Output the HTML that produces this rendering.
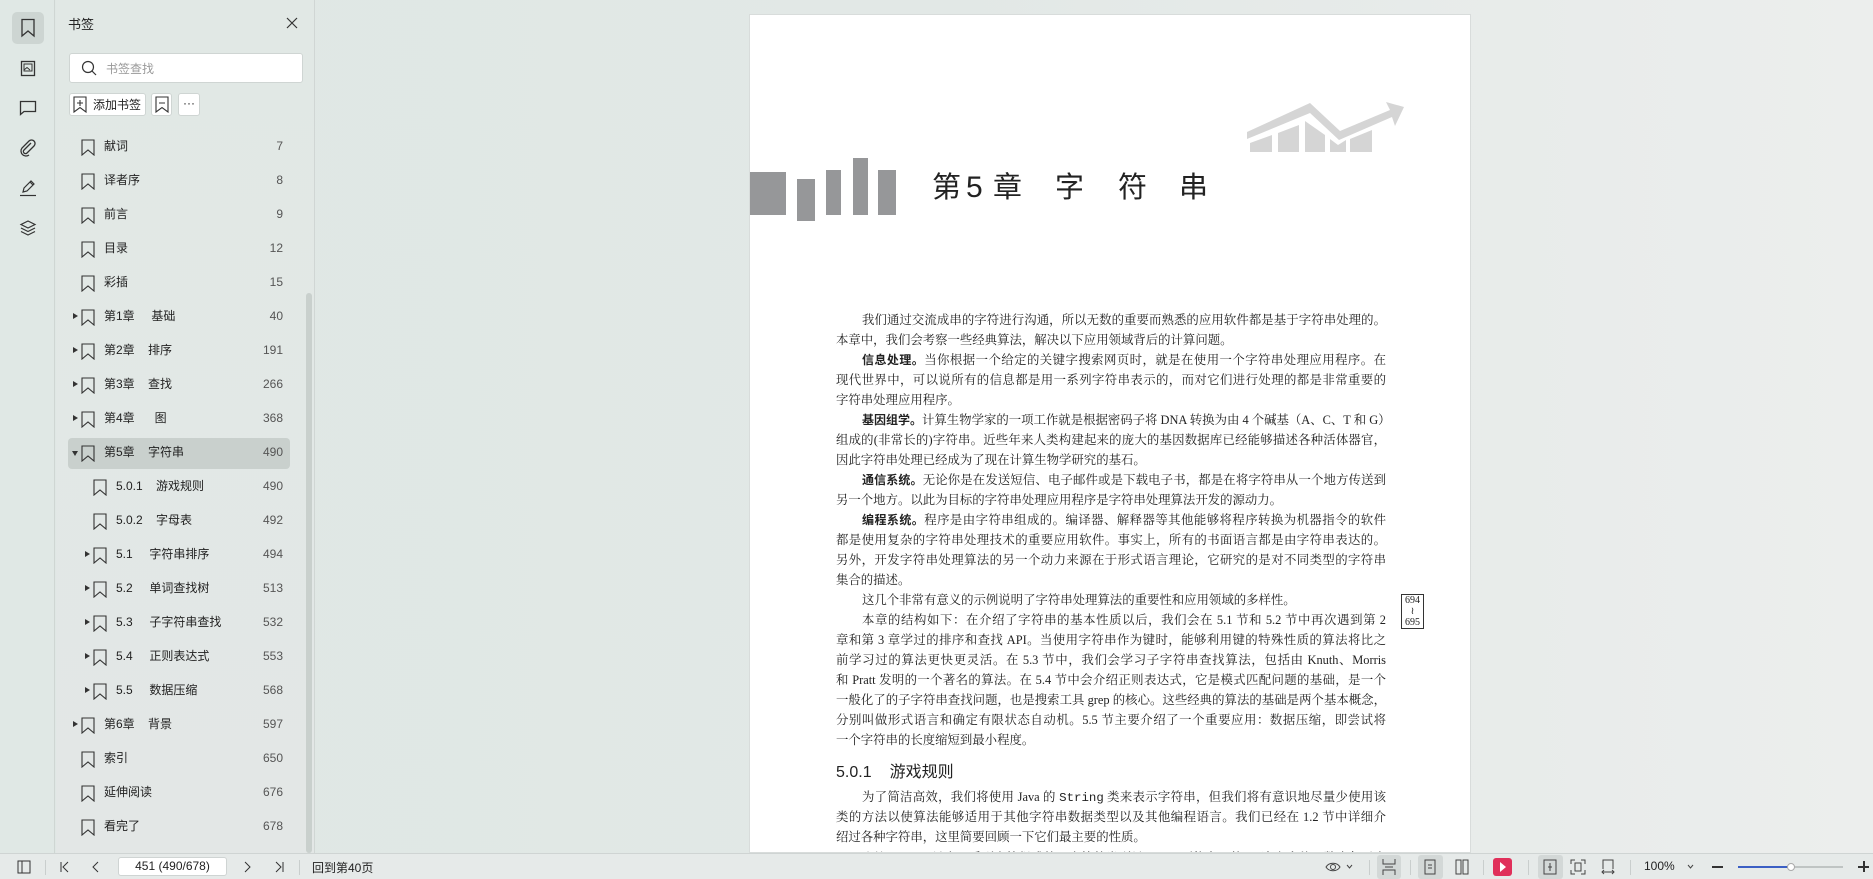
<!DOCTYPE html>
<html><head><meta charset="utf-8">
<style>
*{margin:0;padding:0;box-sizing:border-box}
body{width:1873px;height:879px;overflow:hidden;position:relative;font-family:"Liberation Sans","Noto Sans CJK SC",sans-serif;background:linear-gradient(90deg,#dfe7e4 0%,#e2e8e6 50%,#eceeed 100%);color:#222}
.abs{position:absolute}
#strip{left:0;top:0;width:55px;height:853px;background:#e0e8e5;border-right:1px solid #cfd6d3}
#panel{left:56px;top:0;width:259px;height:853px;background:linear-gradient(180deg,#e1e8e5,#e3e7e6);border-right:1px solid #d0d6d4}
.row{position:absolute;left:68px;width:222px;height:31px;font-size:12px;line-height:31px;color:#222}
.row .n{position:absolute;right:7px;top:0;color:#555}
.row svg{position:absolute;top:8px}
.row .t{position:absolute;top:0;white-space:pre}
.tri{position:absolute;top:12px;width:0;height:0;border-top:3.5px solid transparent;border-bottom:3.5px solid transparent;border-left:5px solid #333}
.trid{position:absolute;top:14px;width:0;height:0;border-left:3.5px solid transparent;border-right:3.5px solid transparent;border-top:5px solid #333}
.l0 svg{left:13px}.l0 .t{left:36px}.l0 .tri{left:5px}.l0 .trid{left:4px}
.l1 svg{left:25px}.l1 .t{left:48px}.l1 .tri{left:17px}
#page{left:749px;top:14px;width:722px;height:839px;background:#fff;border:1px solid #d8dcdb;overflow:hidden}
.ln{position:absolute;left:86px;width:550px;height:20px;font-family:"Liberation Serif","Noto Serif CJK SC",serif;font-size:12.4px;line-height:20px;color:#222;text-align:justify;text-align-last:justify;white-space:nowrap}
.ln.l{text-align-last:left}
.ln.i{left:112px;width:524px}
.ln b{font-family:"Noto Sans CJK SC",sans-serif;font-weight:700;font-size:12px}
#tb{left:0;top:853px;width:1873px;height:26px;background:#e6eae9;border-top:1px solid #cfd4d3;font-size:12px;color:#222}
.sep{position:absolute;top:6px;width:1px;height:15px;background:#c9cecd}
.hl{position:absolute;top:1px;height:24px;background:#d3d8d7;border-radius:3px}
.ch{position:absolute;top:158px;font-family:"Liberation Sans","Noto Sans CJK SC",sans-serif;font-size:29px;line-height:30px;color:#222}
</style></head><body>

<div id="strip" class="abs">
  <div class="abs" style="left:12px;top:12px;width:32px;height:32px;background:#cdd5d2;border-radius:5px"></div>
  <svg class="abs" style="left:20px;top:18px" width="16" height="20" viewBox="0 0 16 20"><path d="M2 1.5H14V18L8 13 2 18Z" fill="none" stroke="#333" stroke-width="1.3"/></svg>
  <svg class="abs" style="left:20px;top:60px" width="16" height="17" viewBox="0 0 16 17"><rect x="1.5" y="1.5" width="13" height="14" fill="none" stroke="#333" stroke-width="1.3"/><rect x="4" y="4" width="8" height="7" fill="none" stroke="#333" stroke-width="1"/><path d="M4 10 7 7.5 10 10" fill="none" stroke="#333"/></svg>
  <svg class="abs" style="left:19px;top:100px" width="18" height="16" viewBox="0 0 18 16"><path d="M1.5 1.5H16.5V11.5H5L1.5 14.5Z" fill="none" stroke="#333" stroke-width="1.3"/></svg>
  <svg class="abs" style="left:19px;top:139px" width="18" height="18" viewBox="0 0 18 18"><path d="M12 4 5 11a2 2 0 0 0 3 3l7-7a3.5 3.5 0 0 0-5-5L3 9a5 5 0 0 0 7 7" fill="none" stroke="#333" stroke-width="1.3"/></svg>
  <svg class="abs" style="left:19px;top:179px" width="18" height="18" viewBox="0 0 18 18"><path d="M4 13 5 9 12 2 15 5 8 12Z M11 3 14 6" fill="none" stroke="#333" stroke-width="1.2"/><path d="M1 16.5H17" stroke="#333" stroke-width="1.2"/></svg>
  <svg class="abs" style="left:19px;top:219px" width="18" height="18" viewBox="0 0 18 18"><path d="M9 2 16 5.5 9 9 2 5.5Z M2 9 9 12.5 16 9 M2 12.5 9 16 16 12.5" fill="none" stroke="#333" stroke-width="1.2"/></svg>
</div>

<div id="panel" class="abs">
  <div class="abs" style="left:12px;top:14px;font-size:13px;color:#222">书签</div>
  <svg class="abs" style="left:230px;top:17px" width="12" height="12" viewBox="0 0 12 12"><path d="M1 1 11 11M11 1 1 11" stroke="#333" stroke-width="1.2"/></svg>
  <div class="abs" style="left:13px;top:53px;width:234px;height:30px;background:#fff;border:1px solid #cfd5d3;border-radius:3px"></div>
  <svg class="abs" style="left:25px;top:60px" width="16" height="16" viewBox="0 0 16 16"><circle cx="7" cy="7" r="5.5" fill="none" stroke="#333" stroke-width="1.2"/><path d="M11 11 15 15" stroke="#333" stroke-width="1.2"/></svg>
  <div class="abs" style="left:50px;top:60px;font-size:12px;color:#999">书签查找</div>
  <div class="abs" style="left:13px;top:93px;width:77px;height:23px;background:#fff;border:1px solid #cfd5d3;border-radius:3px"></div>
  <svg class="abs" style="left:17px;top:96px" width="14" height="17" viewBox="0 0 14 17"><path d="M1 1H13V16L7 11.5 1 16Z M7 4V10M4 7H10" fill="none" stroke="#333" stroke-width="1.1"/></svg>
  <div class="abs" style="left:37px;top:96px;font-size:12px">添加书签</div>
  <div class="abs" style="left:95px;top:93px;width:21px;height:23px;background:#fff;border:1px solid #cfd5d3;border-radius:3px"></div>
  <svg class="abs" style="left:99px;top:96px" width="14" height="17" viewBox="0 0 14 17"><path d="M1 1H13V16L7 11.5 1 16Z M4 7H10" fill="none" stroke="#333" stroke-width="1.1"/></svg>
  <div class="abs" style="left:122px;top:93px;width:22px;height:23px;background:#fff;border:1px solid #cfd5d3;border-radius:3px;font-size:12px;text-align:center;line-height:18px">···</div>
  <div class="abs" style="left:250px;top:293px;width:6px;height:560px;background:#c9d0cd;border-radius:3px"></div>
</div>

<div class="abs" style="left:68px;top:438px;width:222px;height:31px;background:#c9d0cd;border-radius:4px"></div>

<div class="row l0" style="top:131px"><svg width="14" height="17" viewBox="0 0 14 17"><path d="M1 1H13V16L7 11 1 16Z" fill="none" stroke="#333" stroke-width="1.1"/></svg><span class="t">献词</span><span class="n">7</span></div>
<div class="row l0" style="top:165px"><svg width="14" height="17" viewBox="0 0 14 17"><path d="M1 1H13V16L7 11 1 16Z" fill="none" stroke="#333" stroke-width="1.1"/></svg><span class="t">译者序</span><span class="n">8</span></div>
<div class="row l0" style="top:199px"><svg width="14" height="17" viewBox="0 0 14 17"><path d="M1 1H13V16L7 11 1 16Z" fill="none" stroke="#333" stroke-width="1.1"/></svg><span class="t">前言</span><span class="n">9</span></div>
<div class="row l0" style="top:233px"><svg width="14" height="17" viewBox="0 0 14 17"><path d="M1 1H13V16L7 11 1 16Z" fill="none" stroke="#333" stroke-width="1.1"/></svg><span class="t">目录</span><span class="n">12</span></div>
<div class="row l0" style="top:267px"><svg width="14" height="17" viewBox="0 0 14 17"><path d="M1 1H13V16L7 11 1 16Z" fill="none" stroke="#333" stroke-width="1.1"/></svg><span class="t">彩插</span><span class="n">15</span></div>
<div class="row l0" style="top:301px"><div class="tri"></div><svg width="14" height="17" viewBox="0 0 14 17"><path d="M1 1H13V16L7 11 1 16Z" fill="none" stroke="#333" stroke-width="1.1"/></svg><span class="t">第1章     基础</span><span class="n">40</span></div>
<div class="row l0" style="top:335px"><div class="tri"></div><svg width="14" height="17" viewBox="0 0 14 17"><path d="M1 1H13V16L7 11 1 16Z" fill="none" stroke="#333" stroke-width="1.1"/></svg><span class="t">第2章    排序</span><span class="n">191</span></div>
<div class="row l0" style="top:369px"><div class="tri"></div><svg width="14" height="17" viewBox="0 0 14 17"><path d="M1 1H13V16L7 11 1 16Z" fill="none" stroke="#333" stroke-width="1.1"/></svg><span class="t">第3章    查找</span><span class="n">266</span></div>
<div class="row l0" style="top:403px"><div class="tri"></div><svg width="14" height="17" viewBox="0 0 14 17"><path d="M1 1H13V16L7 11 1 16Z" fill="none" stroke="#333" stroke-width="1.1"/></svg><span class="t">第4章      图</span><span class="n">368</span></div>
<div class="row l0" style="top:437px"><div class="trid"></div><svg width="14" height="17" viewBox="0 0 14 17"><path d="M1 1H13V16L7 11 1 16Z" fill="none" stroke="#333" stroke-width="1.1"/></svg><span class="t">第5章    字符串</span><span class="n">490</span></div>
<div class="row l1" style="top:471px"><svg width="14" height="17" viewBox="0 0 14 17"><path d="M1 1H13V16L7 11 1 16Z" fill="none" stroke="#333" stroke-width="1.1"/></svg><span class="t">5.0.1    游戏规则</span><span class="n">490</span></div>
<div class="row l1" style="top:505px"><svg width="14" height="17" viewBox="0 0 14 17"><path d="M1 1H13V16L7 11 1 16Z" fill="none" stroke="#333" stroke-width="1.1"/></svg><span class="t">5.0.2    字母表</span><span class="n">492</span></div>
<div class="row l1" style="top:539px"><div class="tri"></div><svg width="14" height="17" viewBox="0 0 14 17"><path d="M1 1H13V16L7 11 1 16Z" fill="none" stroke="#333" stroke-width="1.1"/></svg><span class="t">5.1     字符串排序</span><span class="n">494</span></div>
<div class="row l1" style="top:573px"><div class="tri"></div><svg width="14" height="17" viewBox="0 0 14 17"><path d="M1 1H13V16L7 11 1 16Z" fill="none" stroke="#333" stroke-width="1.1"/></svg><span class="t">5.2     单词查找树</span><span class="n">513</span></div>
<div class="row l1" style="top:607px"><div class="tri"></div><svg width="14" height="17" viewBox="0 0 14 17"><path d="M1 1H13V16L7 11 1 16Z" fill="none" stroke="#333" stroke-width="1.1"/></svg><span class="t">5.3     子字符串查找</span><span class="n">532</span></div>
<div class="row l1" style="top:641px"><div class="tri"></div><svg width="14" height="17" viewBox="0 0 14 17"><path d="M1 1H13V16L7 11 1 16Z" fill="none" stroke="#333" stroke-width="1.1"/></svg><span class="t">5.4     正则表达式</span><span class="n">553</span></div>
<div class="row l1" style="top:675px"><div class="tri"></div><svg width="14" height="17" viewBox="0 0 14 17"><path d="M1 1H13V16L7 11 1 16Z" fill="none" stroke="#333" stroke-width="1.1"/></svg><span class="t">5.5     数据压缩</span><span class="n">568</span></div>
<div class="row l0" style="top:709px"><div class="tri"></div><svg width="14" height="17" viewBox="0 0 14 17"><path d="M1 1H13V16L7 11 1 16Z" fill="none" stroke="#333" stroke-width="1.1"/></svg><span class="t">第6章    背景</span><span class="n">597</span></div>
<div class="row l0" style="top:743px"><svg width="14" height="17" viewBox="0 0 14 17"><path d="M1 1H13V16L7 11 1 16Z" fill="none" stroke="#333" stroke-width="1.1"/></svg><span class="t">索引</span><span class="n">650</span></div>
<div class="row l0" style="top:777px"><svg width="14" height="17" viewBox="0 0 14 17"><path d="M1 1H13V16L7 11 1 16Z" fill="none" stroke="#333" stroke-width="1.1"/></svg><span class="t">延伸阅读</span><span class="n">676</span></div>
<div class="row l0" style="top:811px"><svg width="14" height="17" viewBox="0 0 14 17"><path d="M1 1H13V16L7 11 1 16Z" fill="none" stroke="#333" stroke-width="1.1"/></svg><span class="t">看完了</span><span class="n">678</span></div>

<div id="page" class="abs">
  <svg class="abs" style="left:0;top:0" width="722" height="220">
    <g fill="#969799">
      <rect x="0" y="157" width="36" height="43"/>
      <rect x="47" y="164" width="18" height="42"/>
      <rect x="76" y="155" width="15" height="45"/>
      <rect x="103" y="143" width="15" height="57"/>
      <rect x="128" y="155" width="18" height="45"/>
    </g>
    <g fill="#d5d5d5">
      <path d="M497 117 L560 88 L590 116 L640 95 L636 87 L654 92 L645 111 L642 102 L589 125 L560 98 L497 124Z"/>
      <path d="M500 128 L522 120 V137 H500Z M528 118 L549 110 V137 H528Z M555 106 L575 120 V137 H555Z M580 124 L588 130 L596 125 V137 H580Z M600 124 L622 115 V137 H600Z"/>
    </g>
  </svg>
  <div class="ch" style="left:182px">第</div>
  <div class="ch" style="left:216px;font-size:30px">5</div>
  <div class="ch" style="left:243px">章</div>
  <div class="ch" style="left:305px">字</div>
  <div class="ch" style="left:368px">符</div>
  <div class="ch" style="left:429px">串</div>

  <div class="ln i" style="top:295px">我们通过交流成串的字符进行沟通，所以无数的重要而熟悉的应用软件都是基于字符串处理的。</div>
  <div class="ln l" style="top:315px">本章中，我们会考察一些经典算法，解决以下应用领域背后的计算问题。</div>
  <div class="ln i" style="top:335px"><b>信息处理。</b>当你根据一个给定的关键字搜索网页时，就是在使用一个字符串处理应用程序。在</div>
  <div class="ln" style="top:355px">现代世界中，可以说所有的信息都是用一系列字符串表示的，而对它们进行处理的都是非常重要的</div>
  <div class="ln l" style="top:375px">字符串处理应用程序。</div>
  <div class="ln i" style="top:395px"><b>基因组学。</b>计算生物学家的一项工作就是根据密码子将 DNA 转换为由 4 个碱基（A、C、T 和 G）</div>
  <div class="ln" style="top:415px">组成的(非常长的)字符串。近些年来人类构建起来的庞大的基因数据库已经能够描述各种活体器官，</div>
  <div class="ln l" style="top:435px">因此字符串处理已经成为了现在计算生物学研究的基石。</div>
  <div class="ln i" style="top:455px"><b>通信系统。</b>无论你是在发送短信、电子邮件或是下载电子书，都是在将字符串从一个地方传送到</div>
  <div class="ln l" style="top:475px">另一个地方。以此为目标的字符串处理应用程序是字符串处理算法开发的源动力。</div>
  <div class="ln i" style="top:495px"><b>编程系统。</b>程序是由字符串组成的。编译器、解释器等其他能够将程序转换为机器指令的软件</div>
  <div class="ln" style="top:515px">都是使用复杂的字符串处理技术的重要应用软件。事实上，所有的书面语言都是由字符串表达的。</div>
  <div class="ln" style="top:535px">另外，开发字符串处理算法的另一个动力来源在于形式语言理论，它研究的是对不同类型的字符串</div>
  <div class="ln l" style="top:555px">集合的描述。</div>
  <div class="ln i l" style="top:575px">这几个非常有意义的示例说明了字符串处理算法的重要性和应用领域的多样性。</div>
  <div class="ln i" style="top:595px">本章的结构如下：在介绍了字符串的基本性质以后，我们会在 5.1 节和 5.2 节中再次遇到第 2</div>
  <div class="ln" style="top:615px">章和第 3 章学过的排序和查找 API。当使用字符串作为键时，能够利用键的特殊性质的算法将比之</div>
  <div class="ln" style="top:635px">前学习过的算法更快更灵活。在 5.3 节中，我们会学习子字符串查找算法，包括由 Knuth、Morris</div>
  <div class="ln" style="top:655px">和 Pratt 发明的一个著名的算法。在 5.4 节中会介绍正则表达式，它是模式匹配问题的基础，是一个</div>
  <div class="ln" style="top:675px">一般化了的子字符串查找问题，也是搜索工具 grep 的核心。这些经典的算法的基础是两个基本概念，</div>
  <div class="ln" style="top:695px">分别叫做形式语言和确定有限状态自动机。5.5 节主要介绍了一个重要应用：数据压缩，即尝试将</div>
  <div class="ln l" style="top:715px">一个字符串的长度缩短到最小程度。</div>
  <div class="abs" style="left:651px;top:579px;width:23px;height:35px;border:1px solid #333;font-family:'Liberation Serif',serif;font-size:10px;line-height:11px;text-align:center">694<br>≀<br>695</div>
  <div class="abs" style="left:86px;top:747px;font-family:'Liberation Sans','Noto Sans CJK SC',sans-serif;font-size:16px;line-height:22px;color:#222">5.0.1<span style="margin-left:18px">游戏规则</span></div>
  <div class="ln i" style="top:772px">为了简洁高效，我们将使用 Java 的 <span style="font-family:'Liberation Mono',monospace">String</span> 类来表示字符串，但我们将有意识地尽量少使用该</div>
  <div class="ln" style="top:792px">类的方法以使算法能够适用于其他字符串数据类型以及其他编程语言。我们已经在 1.2 节中详细介</div>
  <div class="ln l" style="top:812px">绍过各种字符串，这里简要回顾一下它们最主要的性质。</div>
  <div class="ln i" style="top:833px"><b>字符。</b>String 是由一系列字符组成的。字符的类型是 char，可能有 2 的 16 次方个值。数十年以来</div>
</div>

<div id="tb" class="abs">
  <svg class="abs" style="left:17px;top:6px" width="14" height="14" viewBox="0 0 14 14"><rect x="1" y="1" width="12" height="12" fill="none" stroke="#333"/><path d="M5 1V13" stroke="#333"/></svg>
  <div class="sep" style="left:45px"></div>
  <svg class="abs" style="left:60px;top:7px" width="10" height="12" viewBox="0 0 10 12"><path d="M1 1V11M8 1 3 6 8 11" fill="none" stroke="#333"/></svg>
  <svg class="abs" style="left:92px;top:7px" width="8" height="12" viewBox="0 0 8 12"><path d="M6 1 1 6 6 11" fill="none" stroke="#333"/></svg>
  <div class="abs" style="left:118px;top:3px;width:109px;height:19px;background:#fff;border:1px solid #cfd4d3;border-radius:3px;text-align:center;line-height:17px;font-size:12px">451 (490/678)</div>
  <svg class="abs" style="left:243px;top:7px" width="8" height="12" viewBox="0 0 8 12"><path d="M2 1 7 6 2 11" fill="none" stroke="#333"/></svg>
  <svg class="abs" style="left:274px;top:7px" width="10" height="12" viewBox="0 0 10 12"><path d="M2 1 7 6 2 11M9 1V11" fill="none" stroke="#333"/></svg>
  <div class="sep" style="left:299px"></div>
  <div class="abs" style="left:312px;top:5px;font-size:12px">回到第40页</div>

  <svg class="abs" style="left:1325px;top:5px" width="16" height="16" viewBox="0 0 16 16"><path d="M1 8C4 3 12 3 15 8 12 13 4 13 1 8Z" fill="none" stroke="#444"/><circle cx="8" cy="8" r="2.5" fill="none" stroke="#444"/></svg>
  <svg class="abs" style="left:1346px;top:10px" width="7" height="5" viewBox="0 0 7 5"><path d="M1 1 3.5 4 6 1" fill="none" stroke="#444"/></svg>
  <div class="sep" style="left:1369px"></div>
  <div class="hl" style="left:1377px;width:24px"></div>
  <svg class="abs" style="left:1382px;top:5px" width="14" height="16" viewBox="0 0 14 16"><path d="M1 0V5H13V0M1 16V11H13V16M3 8H11" fill="none" stroke="#444"/></svg>
  <div class="sep" style="left:1410px"></div>
  <div class="hl" style="left:1418px;width:25px"></div>
  <svg class="abs" style="left:1424px;top:5px" width="12" height="16" viewBox="0 0 12 16"><rect x="1" y="1" width="10" height="14" fill="none" stroke="#444"/><path d="M4 6H8M4 9H8" stroke="#444"/></svg>
  <svg class="abs" style="left:1455px;top:5px" width="14" height="16" viewBox="0 0 14 16"><rect x="1" y="1" width="5" height="14" fill="none" stroke="#444"/><rect x="8" y="1" width="5" height="14" fill="none" stroke="#444"/></svg>
  <div class="sep" style="left:1483px"></div>
  <div class="abs" style="left:1493px;top:4px;width:19px;height:18px;background:#e0305a;border-radius:3px"></div>
  <svg class="abs" style="left:1499px;top:8px" width="8" height="10" viewBox="0 0 8 10"><path d="M1 0 7 5 1 10Z" fill="#fff"/></svg>
  <div class="sep" style="left:1528px"></div>
  <div class="hl" style="left:1538px;width:25px"></div>
  <svg class="abs" style="left:1543px;top:5px" width="14" height="16" viewBox="0 0 14 16"><rect x="1" y="1" width="12" height="14" fill="none" stroke="#444"/><path d="M7 4V12M5 8H9" stroke="#444"/></svg>
  <svg class="abs" style="left:1570px;top:5px" width="16" height="16" viewBox="0 0 16 16"><path d="M1 5V1H5M11 1H15V5M15 11V15H11M5 15H1V11" fill="none" stroke="#444"/><rect x="5" y="4" width="6" height="8" fill="none" stroke="#444"/></svg>
  <svg class="abs" style="left:1601px;top:5px" width="14" height="16" viewBox="0 0 14 16"><path d="M2 10V1H12V10M1 13H13M3 11 1 13 3 15M11 11 13 13 11 15" fill="none" stroke="#444"/></svg>
  <div class="sep" style="left:1630px"></div>
  <div class="abs" style="left:1644px;top:5px;font-size:12px">100%</div>
  <svg class="abs" style="left:1687px;top:10px" width="7" height="5" viewBox="0 0 7 5"><path d="M1 1 3.5 4 6 1" fill="none" stroke="#444"/></svg>
  <div class="abs" style="left:1712px;top:12px;width:11px;height:1.5px;background:#333"></div>
  <div class="abs" style="left:1738px;top:12px;width:53px;height:2px;background:#3b5fc4"></div>
  <div class="abs" style="left:1791px;top:12px;width:52px;height:2px;background:#bfc4c3"></div>
  <div class="abs" style="left:1787px;top:9px;width:8px;height:8px;background:#fff;border:1px solid #aaa;border-radius:50%"></div>
  <div class="abs" style="left:1858px;top:12px;width:11px;height:1.5px;background:#333"></div>
  <div class="abs" style="left:1863px;top:7px;width:1.5px;height:11px;background:#333"></div>
</div>
</body></html>
